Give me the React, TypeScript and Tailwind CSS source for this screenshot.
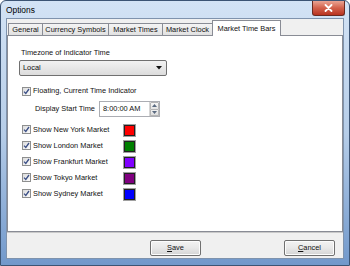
import React from "react";

const tabs = [
  { label: "General", w: "w-[34px]" },
  { label: "Currency Symbols", w: "w-[66px]" },
  { label: "Market Times", w: "w-[54px]" },
  { label: "Market Clock", w: "w-[50px]" },
];

const markets = [
  { label: "Show New York Market", color: "bg-[#ff0000]" },
  { label: "Show London Market", color: "bg-[#008000]" },
  { label: "Show Frankfurt Market", color: "bg-[#8000ff]" },
  { label: "Show Tokyo Market", color: "bg-[#800080]" },
  { label: "Show Sydney Market", color: "bg-[#0000ff]" },
];

const Check = () => (
  <div className="w-[9px] h-[9px] border border-[#8e8f8f] bg-gradient-to-br from-[#dcdcdc] to-[#fbfbfb] flex items-center justify-center shrink-0">
    <svg width="7" height="7" viewBox="0 0 7 7">
      <path d="M1 3.6 L2.8 5.4 L6 1" fill="none" stroke="#3b4f86" strokeWidth="1.3" />
    </svg>
  </div>
);

const Button = ({ first, rest }: { first: string; rest: string }) => (
  <div className="w-[51px] h-[16px] border border-[#707070] rounded-[2px] bg-gradient-to-b from-[#f3f3f3] via-[#e8e8e8] to-[#d4d4d4] flex items-center justify-center shadow-[inset_0_0_0_1px_#fcfcfc]">
    <span className="leading-none">
      <span className="underline">{first}</span>
      {rest}
    </span>
  </div>
);

export default function App() {
  return (
    <div
      className="w-[350px] h-[266px] rounded-t-[6px] border border-[#3c5474] bg-gradient-to-b from-[#d3e3f5] via-[#b6cde8] to-[#7198cb] flex flex-col text-[7.4px] text-[#111] relative"
      style={{ fontFamily: '"Liberation Sans", Arial, sans-serif' }}
    >
      {/* title bar */}
      <div className="h-[17px] flex items-center pl-[5px] pt-[2px] text-[8.4px] text-black">Options</div>
      <div className="absolute top-0 right-[4px] w-[33px] h-[15px] rounded-b-[3px] border border-t-0 border-[#6a2a20] bg-gradient-to-b from-[#e9a393] via-[#d2604b] to-[#b8321f] flex items-center justify-center">
        <svg width="9" height="8" viewBox="0 0 9 8">
          <path d="M1.5 1 L7.5 7 M7.5 1 L1.5 7" stroke="#fff" strokeWidth="1.8" strokeLinecap="round" />
        </svg>
      </div>

      {/* client area */}
      <div className="mx-[5px] mb-[6px] flex-1 bg-[#f0f0f0] flex flex-col border border-[#7f93ad]">
        {/* tab strip */}
        <div className="h-[16px] flex items-end pl-[1px]">
          {tabs.map((t) => (
            <div
              key={t.label}
              className={`${t.w} h-[13px] mb-[-1px] border border-[#898c95] border-r-0 bg-gradient-to-b from-[#f4f4f4] to-[#e1e1e1] flex items-center justify-center whitespace-nowrap`}
            >
              {t.label}
            </div>
          ))}
          <div className="w-[69px] h-[16px] mb-[-1px] border border-[#898c95] border-b-0 bg-white flex items-start pt-[2px] justify-center whitespace-nowrap relative z-10">
            Market Time Bars
          </div>
        </div>

        {/* tab panel */}
        <div className="h-[197px] bg-white border border-[#898c95] flex flex-col pl-[11px]">
          <div className="mt-[12px] h-[10px] flex items-center pl-[2px]">Timezone of Indicator Time</div>
          <div className="mt-[2px] w-[148px] h-[16px] border border-[#707070] rounded-[2px] bg-gradient-to-b from-[#f2f2f2] to-[#dcdcdc] flex items-center justify-between px-[3px]">
            <span>Local</span>
            <svg width="6" height="4" viewBox="0 0 6 4" className="mr-[1px]">
              <path d="M0 0 L6 0 L3 3.5 Z" fill="#111" />
            </svg>
          </div>

          <div className="mt-[10px] h-[10px] flex items-center gap-[2px] pl-[3px]">
            <Check />
            <span>Floating, Current Time Indicator</span>
          </div>

          <div className="mt-[5px] h-[16px] flex items-center pl-[16px]">
            <span className="w-[64px]">Display Start Time</span>
            <div className="w-[61px] h-[16px] border border-[#abadb3] flex items-stretch">
              <span className="flex-1 flex items-center pl-[3px]">8:00:00 AM</span>
              <div className="w-[10px] flex flex-col border-l border-[#d5d5d5]">
                <div className="flex-1 bg-gradient-to-b from-[#f6f6f6] to-[#e4e4e4] border border-[#b5b5b5] rounded-t-[1px] flex items-center justify-center">
                  <svg width="5" height="3" viewBox="0 0 5 3"><path d="M0 3 L5 3 L2.5 0 Z" fill="#5a6a80" /></svg>
                </div>
                <div className="flex-1 bg-gradient-to-b from-[#f0f0f0] to-[#dedede] border border-t-0 border-[#b5b5b5] rounded-b-[1px] flex items-center justify-center">
                  <svg width="5" height="3" viewBox="0 0 5 3"><path d="M0 0 L5 0 L2.5 3 Z" fill="#5a6a80" /></svg>
                </div>
              </div>
            </div>
          </div>

          <div className="mt-[5px] flex flex-col">
            {markets.map((m) => (
              <div key={m.label} className="h-[16px] flex items-center pl-[3px]">
                <div className="w-[102px] flex items-center gap-[2px]">
                  <Check />
                  <span className="whitespace-nowrap">{m.label}</span>
                </div>
                <div className={`w-[11px] h-[11px] border border-[#222] outline outline-1 outline-[#a0a0a0] ${m.color}`} />
              </div>
            ))}
          </div>
        </div>

        {/* button bar */}
        <div className="flex-1 border-t border-[#c9c9c9] flex items-start pt-[7px]">
          <div className="ml-[143px]">
            <Button first="S" rest="ave" />
          </div>
          <div className="ml-auto mr-[8px]">
            <Button first="C" rest="ancel" />
          </div>
        </div>
      </div>
    </div>
  );
}
